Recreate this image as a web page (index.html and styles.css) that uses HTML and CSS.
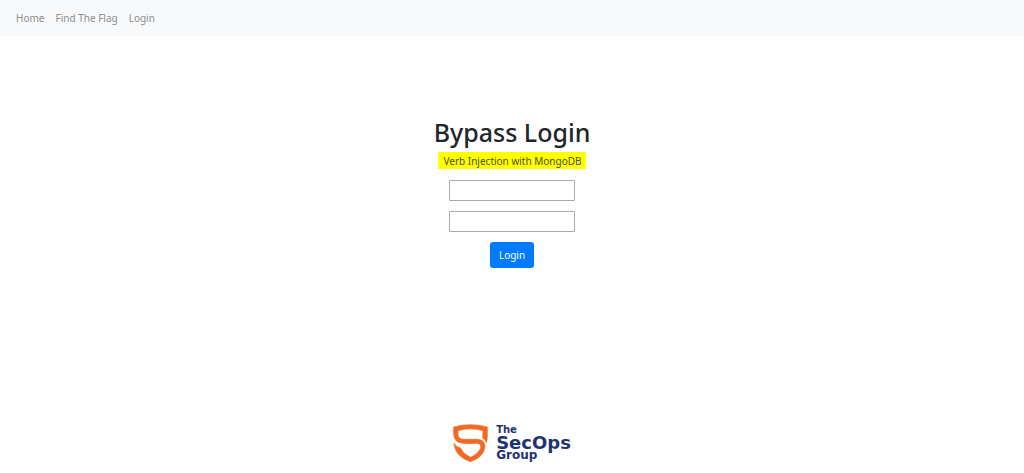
FILE: index.html
```
<!DOCTYPE html>
<html lang="en">
<head>
    <meta charset="UTF-8">
    <meta name="viewport" content="width=device-width, initial-scale=1.0">
    <title>Bypass Login</title>
    <link rel="stylesheet" href="styles.css">
</head>
<body>
    <nav class="navbar">
        <a class="nav-link" href="#">Home</a>
        <a class="nav-link" href="#">Find The Flag</a>
        <a class="nav-link" href="#">Login</a>
    </nav>

    <main class="content">
        <h1>Bypass Login</h1>
        <p class="subtitle">Verb Injection with MongoDB</p>
        <form class="login-form">
            <input type="text" name="username" aria-label="Username">
            <input type="password" name="password" aria-label="Password">
            <button type="submit">Login</button>
        </form>
    </main>

    <footer class="footer">
        <svg class="shield" viewBox="38 31 105 114" aria-hidden="true">
            <path d="M141 40 Q90 26 40 40 L40 62 Q41 87 68 89 Q88 91 106 89 Q123 89 121 102 Q116 119 91 131 Q66 119 62 104 Q47 101 41 88 Q43 128 91 144 Q130 130 134 99 Q135 79 112 77 L72 77 Q54 76 53 64 L53 51 Q90 40 128 51 L127 73 Q136 78 138 87 Q141 78 141 66 Z" fill="#f26a21" stroke="#f26a21" stroke-width="2" stroke-linejoin="round"/>
        </svg>
        <div class="brand">
            <span class="brand-top">The</span>
            <span class="brand-name">SecOps</span>
            <span class="brand-bottom">Group</span>
        </div>
    </footer>
</body>
</html>
```
FILE: styles.css
```
body {
    margin: 0;
    min-height: 100vh;
    display: flex;
    flex-direction: column;
    font-family: "Noto Sans", "Open Sans", sans-serif;
    font-size: 10px;
    line-height: 16px;
    color: #212529;
    background-color: #fff;
}
.navbar {
    display: flex;
    gap: 11px;
    padding: 10px 16px;
    background-color: #f8f9fa;
}
.nav-link {
    color: #8c8d8e;
    text-decoration: none;
}
.content {
    display: flex;
    flex-direction: column;
    align-items: center;
    padding-top: 80px;
}
h1 {
    margin: 0 0 4px;
    font-size: 25px;
    line-height: 32px;
    font-weight: 500;
}
.subtitle {
    margin: 0 0 11px;
    padding: 1px 4px 0 5px;
    background-color: #ff0;
    color: #4b4d10;
}
.login-form {
    display: flex;
    flex-direction: column;
    align-items: center;
    gap: 10px;
}
.login-form input {
    box-sizing: border-box;
    width: 126px;
    height: 21px;
    padding: 1px 4px;
    border: 1px solid #a9a9a9;
    border-radius: 1px;
    font: inherit;
}
.login-form button {
    padding: 5px 9px;
    border: none;
    border-radius: 3px;
    background-color: #007bff;
    color: #fff;
    font: inherit;
    cursor: pointer;
}
.login-form button:hover {
    background-color: #0069d9;
}
.footer {
    display: flex;
    justify-content: center;
    align-items: center;
    gap: 8px;
    margin-top: auto;
    padding-bottom: 11px;
}
.shield {
    width: 35px;
    height: 38px;
}
.brand {
    display: flex;
    flex-direction: column;
    font-family: "DejaVu Sans", sans-serif;
    font-weight: 700;
    line-height: 13px;
    color: #1f3370;
}
.brand-top {
    font-size: 10px;
}
.brand-name {
    font-size: 18px;
}
.brand-bottom {
    font-size: 12px;
}
```
